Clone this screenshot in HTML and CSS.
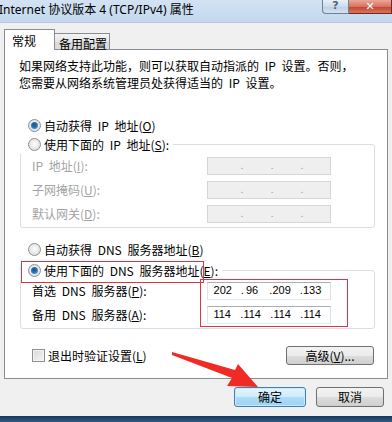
FILE: index.html
```html
<!DOCTYPE html>
<html lang="zh-CN">
<head>
    <meta charset="UTF-8"/>
    <title>Internet 协议版本 4 (TCP/IPv4) 属性</title>
    <link rel="stylesheet" href="styles.css">
</head>
<body>
<div class="titlebar">
    <span class="title">Internet 协议版本 4 (TCP/IPv4) 属性</span>
    <div class="caption">
        <span class="cap-help">?</span>
        <span class="cap-close">✕</span>
    </div>
</div>

<div class="client">
    <div class="tabs">
        <span class="tab active">常规</span>
        <span class="tab">备用配置</span>
    </div>
    <div class="panel">
        <p class="intro">如果网络支持此功能，则可以获取自动指派的 IP 设置。否则，<br>您需要从网络系统管理员处获得适当的 IP 设置。</p>

        <label class="opt first"><span class="radio on"></span>自动获得 IP 地址(<u>O</u>)</label>
        <div class="group">
            <label class="opt legend"><span class="radio"></span>使用下面的 IP 地址(<u>S</u>):</label>
            <div class="row off">
                <span>IP 地址(<u>I</u>):</span>
                <span class="ip"><span class="dot"></span><span class="oct"></span><span class="dot">.</span><span class="oct"></span><span class="dot">.</span><span class="oct"></span><span class="dot">.</span><span class="oct"></span></span>
            </div>
            <div class="row off">
                <span>子网掩码(<u>U</u>):</span>
                <span class="ip"><span class="dot"></span><span class="oct"></span><span class="dot">.</span><span class="oct"></span><span class="dot">.</span><span class="oct"></span><span class="dot">.</span><span class="oct"></span></span>
            </div>
            <div class="row off">
                <span>默认网关(<u>D</u>):</span>
                <span class="ip"><span class="dot"></span><span class="oct"></span><span class="dot">.</span><span class="oct"></span><span class="dot">.</span><span class="oct"></span><span class="dot">.</span><span class="oct"></span></span>
            </div>
        </div>

        <label class="opt dns"><span class="radio"></span>自动获得 DNS 服务器地址(<u>B</u>)</label>
        <div class="group dns-group">
            <label class="opt legend"><span class="radio on"></span>使用下面的 DNS 服务器地址(<u>E</u>):</label>
            <div class="row">
                <span>首选 DNS 服务器(<u>P</u>):</span>
                <span class="ip"><span class="dot"></span><span class="oct">202</span><span class="dot">.</span><span class="oct">96</span><span class="dot">.</span><span class="oct">209</span><span class="dot">.</span><span class="oct">133</span></span>
            </div>
            <div class="row">
                <span>备用 DNS 服务器(<u>A</u>):</span>
                <span class="ip"><span class="dot"></span><span class="oct">114</span><span class="dot">.</span><span class="oct">114</span><span class="dot">.</span><span class="oct">114</span><span class="dot">.</span><span class="oct">114</span></span>
            </div>
        </div>

        <div class="footer">
            <label class="check"><span class="box"></span>退出时验证设置(<u>L</u>)</label>
            <button class="btn adv">高级(<u>V</u>)...</button>
        </div>
    </div>

    <div class="actions">
        <button class="btn default">确定</button>
        <button class="btn cancel">取消</button>
    </div>
</div>

<div class="taskbar"></div>

<!-- 标注：红框和箭头 -->
<svg class="marks" width="392" height="422" viewBox="0 0 392 422">
    <rect x="21.5" y="261.5" width="182" height="21" fill="none" stroke="#dc3545"/>
    <rect x="200.5" y="279.5" width="147" height="47" fill="none" stroke="#dc3545"/>
    <polygon points="172,352 235,370 238,364 258,387 227,386 232,378 172,355" fill="#f02a24"/>
</svg>
</body>
</html>
```

FILE: styles.css
```css
* { box-sizing: border-box; }
body { margin: 0; width: 392px; height: 422px; overflow: hidden; position: relative; background: #f0f0f0; font: 12px/19px "Noto Sans CJK SC", "Noto Sans", sans-serif; color: #000; }
u { text-decoration: underline; }

.titlebar { height: 23px; border-bottom: 1px solid #b8c8d9; background: linear-gradient(#d3e3f4, #c3d7ed); display: flex; justify-content: space-between; align-items: flex-start; }
.title { margin-left: -1px; line-height: 20px; font-family: "Noto Sans", "Noto Sans CJK SC", sans-serif; }
.caption { display: flex; }
.cap-help { width: 27px; height: 14px; border: 1px solid #6f7f94; border-top: 0; border-radius: 0 0 0 4px; background: linear-gradient(#e8f0f9, #cddbeb 50%, #bccfe5 51%, #d4e2f0); color: #50627a; font: bold 11px/12px "DejaVu Sans", sans-serif; text-align: center; }
.cap-close { width: 43px; height: 14px; border: 1px solid #6b2b24; border-top: 0; border-left: 0; background: linear-gradient(#e9a898, #d8735e 50%, #c4412c 51%, #d6775f); color: #fff; font: bold 11px/13px "DejaVu Sans", sans-serif; text-align: center; }

.client { height: 393px; padding: 6px 4px 0; }
.tabs { display: flex; align-items: flex-end; position: relative; z-index: 1; margin-bottom: -1px; }
.tab { height: 16px; margin-bottom: 1px; margin-left: -1px; padding: 1px 0 0 4px; border: 1px solid #898c95; border-bottom: 0; line-height: 17px; background: linear-gradient(#f4f4f4, #e6e6e6 50%, #d9d9d9 51%, #dedede); width: 56px; }
.tab.active { height: 21px; width: 51px; margin: 0; padding: 1px 0 0 7px; line-height: 19px; background: #fff; }

.panel { border: 1px solid #898c95; background: #fff; padding: 7px 12px 13px 15px; word-spacing: 3px; }
.intro { margin: 0 0 0 -1px; line-height: 17px; }

.opt { display: flex; align-items: center; height: 19px; padding-left: 8px; }
.opt.first { margin-top: 25px; }
.opt.dns { margin-top: 12px; }
.radio { width: 13px; height: 13px; margin-right: 3px; border: 1px solid #8e8f8f; border-radius: 50%; background: radial-gradient(circle at 50% 45%, #fdfdfd, #e8e8e8 55%, #cdcdcd); display: flex; align-items: center; justify-content: center; }
.radio.on::after { content: ""; width: 7px; height: 7px; border-radius: 50%; background: radial-gradient(circle at 45% 40%, #1b4f80, #2a78b8 50%, #6cc0ee); }

.group { margin-top: 9px; padding: 0 0 5px 11px; border: 1px solid #d5dfe5; border-radius: 3px; }
.group.dns-group { margin-top: 11px; }
.legend { width: fit-content; margin: -10px 0 0 -12px; padding-right: 4px; background: #fff; }

.row { display: grid; grid-template-columns: 175px 124px; align-items: center; height: 18px; margin-top: 6px; }
.legend + .row { margin-top: 2px; }
.dns-group .legend + .row { margin-top: 1px; }
.row.off { color: #a3a3a3; }

.ip { display: flex; align-items: center; height: 18px; padding-left: 2px; border: 1px solid #abadb3; border-color: #abadb3 #dbdfe6 #e3e9ef #e2e3ea; background: #fff; color: #000; font-family: "Liberation Sans", sans-serif; font-size: 11px; word-spacing: 0; }
.off .ip { border-color: #d5d5d5; background: #efefef; color: #9a9a9a; }
.dot { width: 4px; text-align: center; }
.oct { width: 18px; margin-right: 9px; text-align: center; }

.footer { display: flex; justify-content: space-between; align-items: center; margin-top: 17px; padding: 0 1px 0 12px; height: 19px; }
.check { display: flex; align-items: center; }
.box { width: 13px; height: 13px; margin-right: 3px; border: 1px solid #8e8f8f; background: linear-gradient(135deg, #d8d8d8, #f6f6f6); box-shadow: inset 0 0 0 1px #f4f4f4; }

.btn { height: 19px; padding: 0; border: 1px solid #707070; border-radius: 3px; background: linear-gradient(#f3f3f3, #ebebeb 50%, #dddddd 51%, #cfcfcf); font: 12px/16px "Noto Sans CJK SC", sans-serif; color: #000; }
.btn.adv { width: 88px; }
.actions { display: flex; justify-content: flex-end; gap: 10px; margin-top: 8px; padding-right: 4px; }
.btn.default { width: 72px; height: 20px; border-color: #3c7fb1; background: linear-gradient(#e6f5fd, #cdeafa 50%, #aedcf6 51%, #9dd3f1); box-shadow: inset 0 0 0 1px #c8ecfb; }
.btn.cancel { width: 68px; height: 20px; }

.taskbar { height: 6px; background: linear-gradient(#1a3858, #2d5a86); }
.marks { position: absolute; left: 0; top: 0; pointer-events: none; }
```
